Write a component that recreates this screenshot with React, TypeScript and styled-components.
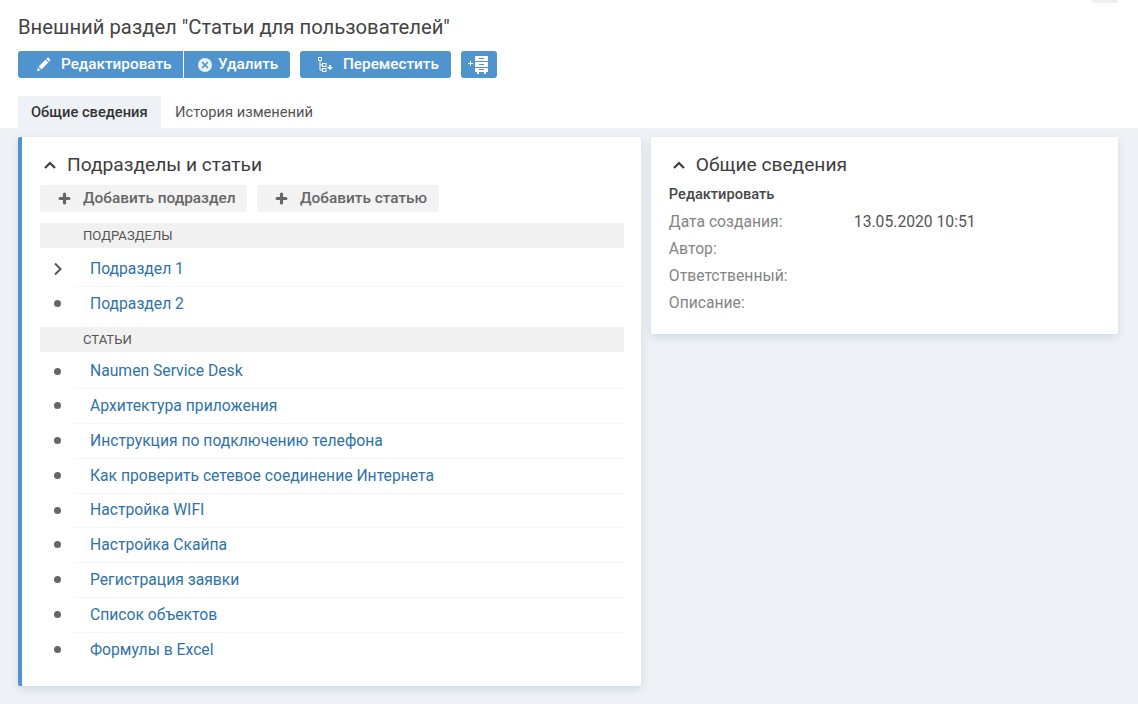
import React from 'react';
import styled, { createGlobalStyle } from 'styled-components';
import { Plus, X } from 'lucide-react';

const Global = createGlobalStyle`
  html, body {
    margin: 0;
    padding: 0;
    background: #eef2f7;
  }
  * {
    box-sizing: border-box;
  }
  body {
    font-family: Roboto, "Liberation Sans", sans-serif;
    color: #444;
  }
`;

const Page = styled.div`
  width: 1138px;
  height: 704px;
  overflow: hidden;
  display: flex;
  flex-direction: column;
`;

const Header = styled.header`
  position: relative;
  height: 128px;
  background: #fff;
  padding: 16px 18px 0;
  flex: none;
  display: flex;
  flex-direction: column;
`;

const TopStub = styled.div`
  position: absolute;
  top: 0;
  right: 20px;
  width: 26px;
  height: 3px;
  background: #efefef;
  border-radius: 0 0 2px 2px;
`;

const Title = styled.h1`
  margin: 0;
  font-size: 20.25px;
  line-height: 22px;
  font-weight: 400;
  color: #444;
`;

const Toolbar = styled.div`
  display: flex;
  margin-top: 13px;
  height: 27px;
`;

const ActionButton = styled.button<{ $w: number; $gap?: number; $joined?: 'left' | 'right'; $pad?: number }>`
  width: ${p => p.$w}px;
  margin-right: ${p => p.$gap ?? 0}px;
  height: 27px;
  border: 0;
  padding: 0 0 0 ${p => p.$pad ?? 0}px;
  background: #4f94cd;
  color: #fff;
  font: 500 15.3px/27px Roboto, sans-serif;
  display: flex;
  align-items: center;
  border-radius: ${p =>
    p.$joined === 'left' ? '3px 0 0 3px' : p.$joined === 'right' ? '0 3px 3px 0' : '3px'};
  border-left: ${p => (p.$joined === 'right' ? '1px solid #fff' : '0')};
`;

const ButtonIcon = styled.svg<{ $mr: number }>`
  flex: none;
  margin-right: ${p => p.$mr}px;
`;

const RoundIcon = styled.span`
  flex: none;
  display: flex;
  width: 14px;
  height: 14px;
  margin-right: 6px;
  border-radius: 7px;
  background: #e8f1f8;
  align-items: center;
  justify-content: center;
`;

const Tabs = styled.div`
  display: flex;
  margin-top: 18px;
  height: 32px;
`;

const Tab = styled.div<{ $active?: boolean }>`
  width: ${p => (p.$active ? 143 : 166)}px;
  padding-left: ${p => (p.$active ? 13 : 14)}px;
  font-size: ${p => (p.$active ? 14.7 : 14.7)}px;
  line-height: 32px;
  font-weight: ${p => (p.$active ? 500 : 400)};
  color: ${p => (p.$active ? '#333' : '#555')};
  background: ${p => (p.$active ? '#eef2f7' : 'transparent')};
  border-radius: 2px 2px 0 0;
`;

const Content = styled.main`
  display: flex;
  align-items: flex-start;
  gap: 10px;
  padding: 9px 20px 0 18px;
`;

const Card = styled.section<{ $w: number; $h: number; $accent?: boolean }>`
  width: ${p => p.$w}px;
  height: ${p => p.$h}px;
  background: #fff;
  border-left: ${p => (p.$accent ? '4px solid #4f94cd' : '0')};
  border-radius: 2px;
  box-shadow: 0 3px 8px rgba(60, 80, 120, 0.16);
  padding: 17px 17px 0 18px;
`;

const CardTitle = styled.h2`
  display: flex;
  align-items: center;
  margin: 0;
  height: 22px;
  font-size: 19.2px;
  line-height: 22px;
  font-weight: 400;
  color: #3d3d3d;
`;

const Caret = styled.svg`
  flex: none;
  margin-left: 3px;
  margin-right: 10px;
`;

const AddRow = styled.div`
  display: flex;
  gap: 10px;
  margin-top: 9px;
`;

const AddButton = styled.button<{ $w: number }>`
  width: ${p => p.$w}px;
  height: 27px;
  padding: 0 0 0 17px;
  border: 0;
  border-radius: 2px;
  background: #f3f3f3;
  color: #666;
  display: flex;
  align-items: center;
  gap: 11px;
  font: 500 15.4px/27px Roboto, sans-serif;
`;

const GroupHead = styled.div<{ $top: number; $bottom: number }>`
  margin: ${p => p.$top}px 0 ${p => p.$bottom}px;
  height: 25px;
  padding-left: 43px;
  background: #f1f1f1;
  border-radius: 2px;
  font-size: 13.1px;
  line-height: 25px;
  color: #555;
`;

const Row = styled.div<{ $last?: boolean }>`
  display: flex;
  align-items: center;
  height: 34.75px;
  margin-left: 34px;
  padding-left: 16px;
  position: relative;
  border-bottom: ${p => (p.$last ? '0' : '1px solid #f5f5f5')};
`;

const Bullet = styled.span`
  position: absolute;
  left: -20px;
  top: 13px;
  width: 7px;
  height: 7px;
  border-radius: 50%;
  background: #666;
`;

const Chevron = styled.svg`
  position: absolute;
  left: -21px;
  top: 10px;
`;

const ItemLink = styled.a`
  font-size: 15.7px;
  line-height: 20px;
  color: #2f72a8;
  text-decoration: none;
`;

const EditLink = styled.div`
  margin-top: 10px;
  font-size: 14.6px;
  line-height: 17px;
  font-weight: 500;
  color: #484848;
`;

const Props = styled.dl`
  margin: 5px 0 0;
  display: grid;
  grid-template-columns: 185px 1fr;
  grid-auto-rows: 27px;
  font-size: 15.7px;
  line-height: 27px;
`;

const Term = styled.dt`
  color: #858585;
`;

const Value = styled.dd`
  margin: 0;
  color: #555;
`;

const Pencil = () => (
  <ButtonIcon $mr={10} width="15" height="15" viewBox="0 0 15 15">
    <path fill="#fff" d="M1 14l.8-3.6 2.8 2.8L1 14zM2.6 9.6l6.9-6.9 2.8 2.8-6.9 6.9-2.8-2.8zM10.2 2l1.2-1.2c.4-.3.8-.3 1.2 0l1.6 1.6c.4.4.3.9 0 1.2L13 4.8 10.2 2z" />
  </ButtonIcon>
);

const CircleX = () => (
  <RoundIcon>
    <X size={10} color="#4f94cd" strokeWidth={4} />
  </RoundIcon>
);

const TreeMove = () => (
  <ButtonIcon $mr={9} width="17" height="16" viewBox="0 0 17 16">
    <g fill="none" stroke="#fff" strokeWidth="1">
      <rect x="1.5" y="0.5" width="3" height="3" />
      <rect x="5.5" y="6.5" width="3.5" height="3" />
      <rect x="5.5" y="11.5" width="3.5" height="3" />
      <path d="M3 3.5V13H5.5M3 8H5.5" />
    </g>
    <path fill="#fff" d="M12 8h2v2h2l-3 3-3-3h2z" />
  </ButtonIcon>
);

const CabinetAdd = () => (
  <ButtonIcon $mr={0} width="22" height="20" viewBox="0 0 22 20">
    <path fill="#fff" d="M0 8h2V6h1v2h2v1H3v2H2V9H0z" />
    <path fill="#fff" d="M7 1h13v5H7zM7 7h13v5H7zM7 13h13v4h-2v2h-2v-2H11v2H9v-2H7z" />
    <path fill="#4f94cd" d="M11 3h5v1h-5zM11 9h5v1h-5zM11 14h5v1h-5z" />
  </ButtonIcon>
);

const CaretUp = () => (
  <Caret width="14" height="10" viewBox="0 0 14 10">
    <path d="M2 8l5-5 5 5" fill="none" stroke="#3d3d3d" strokeWidth="2.2" />
  </Caret>
);

const subsections = ['Подраздел 1', 'Подраздел 2'];
const articles = [
  'Naumen Service Desk',
  'Архитектура приложения',
  'Инструкция по подключению телефона',
  'Как проверить сетевое соединение Интернета',
  'Настройка WIFI',
  'Настройка Скайпа',
  'Регистрация заявки',
  'Список объектов',
  'Формулы в Excel',
];

export default function App() {
  return (
    <Page>
      <Global />
      <Header>
        <TopStub />
        <Title>Внешний раздел "Статьи для пользователей"</Title>
        <Toolbar>
          <ActionButton $w={165} $joined="left" $pad={18}>
            <Pencil />
            Редактировать
          </ActionButton>
          <ActionButton $w={107} $gap={10} $joined="right" $pad={14}>
            <CircleX />
            Удалить
          </ActionButton>
          <ActionButton $w={151} $gap={10} $pad={17}>
            <TreeMove />
            Переместить
          </ActionButton>
          <ActionButton $w={36} $pad={7}>
            <CabinetAdd />
          </ActionButton>
        </Toolbar>
        <Tabs>
          <Tab $active>Общие сведения</Tab>
          <Tab>История изменений</Tab>
        </Tabs>
      </Header>
      <Content>
        <Card $w={624} $h={549} $accent>
          <CardTitle>
            <CaretUp />
            Подразделы и статьи
          </CardTitle>
          <AddRow>
            <AddButton $w={207}>
              <Plus size={15} strokeWidth={5} color="#666" />
              Добавить подраздел
            </AddButton>
            <AddButton $w={182}>
              <Plus size={15} strokeWidth={5} color="#666" />
              Добавить статью
            </AddButton>
          </AddRow>
          <GroupHead $top={11} $bottom={4}>ПОДРАЗДЕЛЫ</GroupHead>
          {subsections.map((s, i) => (
            <Row key={s} $last={i === subsections.length - 1}>
              {i === 0 ? (
                <Chevron width="10" height="14" viewBox="0 0 10 14">
                  <path d="M2 1.5L7.5 7 2 12.5" fill="none" stroke="#555" strokeWidth="2" />
                </Chevron>
              ) : (
                <Bullet />
              )}
              <ItemLink>{s}</ItemLink>
            </Row>
          ))}
          <GroupHead $top={5} $bottom={3}>СТАТЬИ</GroupHead>
          {articles.map((a, i) => (
            <Row key={a} $last={i === articles.length - 1}>
              <Bullet />
              <ItemLink>{a}</ItemLink>
            </Row>
          ))}
        </Card>
        <Card $w={468} $h={197}>
          <CardTitle>
            <CaretUp />
            Общие сведения
          </CardTitle>
          <EditLink>Редактировать</EditLink>
          <Props>
            <Term>Дата создания:</Term>
            <Value>13.05.2020 10:51</Value>
            <Term>Автор:</Term>
            <Value />
            <Term>Ответственный:</Term>
            <Value />
            <Term>Описание:</Term>
            <Value />
          </Props>
        </Card>
      </Content>
    </Page>
  );
}
